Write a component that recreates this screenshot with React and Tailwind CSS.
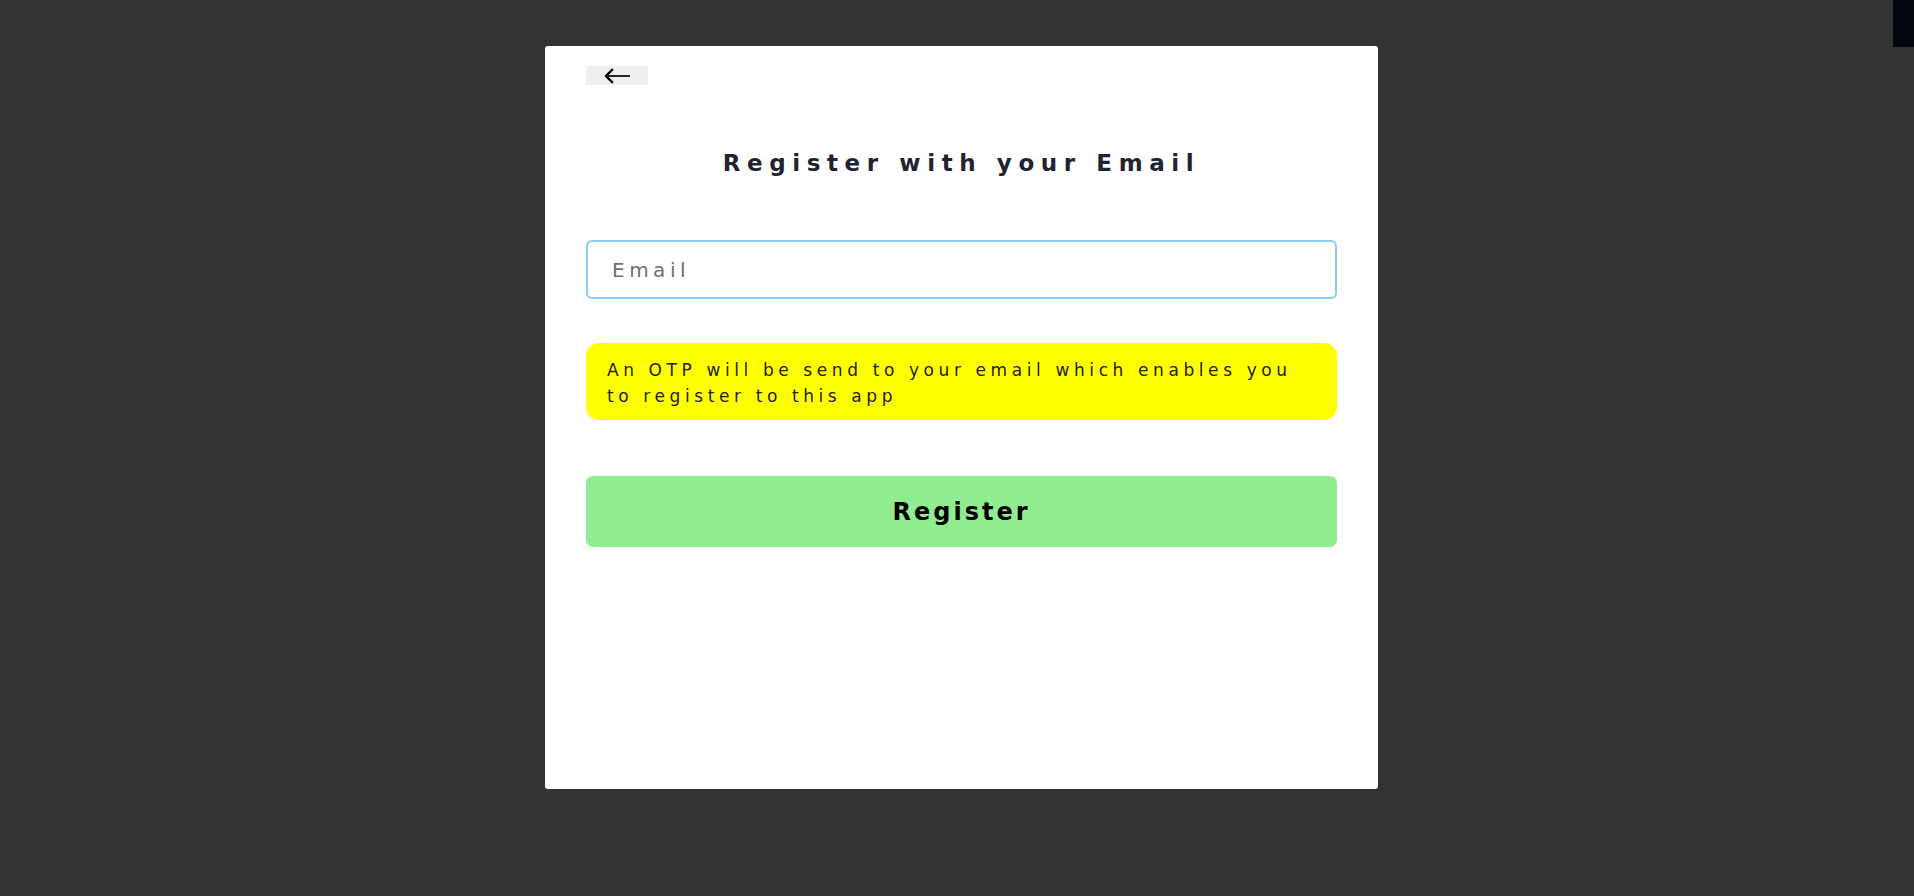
import React, { useState } from 'react';

function BackArrow() {
  return (
    <svg width="28" height="16" viewBox="0 0 28 16" fill="none">
      <path d="M3 8 H27" stroke="#111" strokeWidth="1.8" />
      <path d="M9 2 L3 8 L9 14" stroke="#000" strokeWidth="2.4" strokeLinecap="square" />
    </svg>
  );
}

export default function App() {
  const [email, setEmail] = useState('');

  return (
    <div
      className="relative w-full h-[896px] bg-[#333333] flex justify-center pl-[9px] overflow-hidden"
      style={{ fontFamily: '"DejaVu Sans", Verdana, sans-serif' }}
    >
      <div className="absolute top-0 right-0 w-[21px] h-[47px] bg-[#03050f]"></div>

      <div className="mt-[46px] w-[833px] h-[743px] bg-white rounded-[3px] px-[41px] pt-[20px] flex flex-col">
        <button className="w-[62px] h-[19px] bg-[#efefef] flex items-center justify-center">
          <BackArrow />
        </button>

        <h2 className="mt-[62px] text-center text-[23px] leading-[32px] font-bold text-[#1f2230] tracking-[6.6px]">
          Register with your Email
        </h2>

        <input
          type="email"
          value={email}
          onChange={(e) => setEmail(e.target.value)}
          placeholder="Email"
          className="mt-[61px] w-full h-[59px] border-2 border-[#87ceeb] rounded-[6px] px-[24px] text-[20px] tracking-[4.5px] text-[#222] placeholder:text-[#707070] outline-none"
        />

        <div className="mt-[44px] bg-[#ffff00] rounded-[13px] pl-[21px] pr-[16px] pt-[14px] pb-[11px] text-[17px] leading-[26px] text-[#222] tracking-[4.6px]">
          An OTP will be send to your email which enables you to register to this app
        </div>

        <button className="mt-[56px] w-full h-[71px] bg-[#90ee90] rounded-[7px] text-[24px] font-bold text-black tracking-[3px]">
          Register
        </button>
      </div>
    </div>
  );
}
